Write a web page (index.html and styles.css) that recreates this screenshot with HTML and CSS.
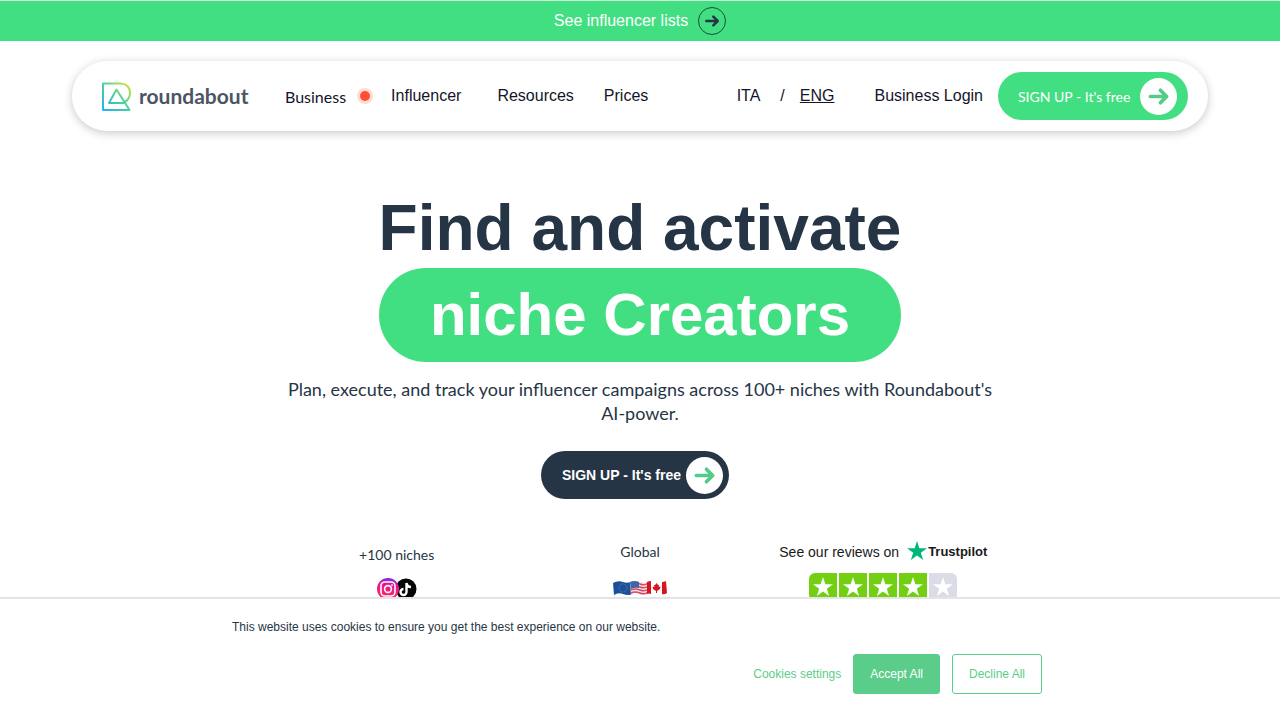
FILE: index.html
```html
<!DOCTYPE html>
<html lang="en">
<head>
    <meta charset="UTF-8">
    <meta name="viewport" content="width=device-width, initial-scale=1.0">
    <title>Roundabout</title>
    <link rel="stylesheet" href="styles.css">
</head>
<body>
    <!-- shared shapes -->
    <svg class="sprite" aria-hidden="true">
        <symbol id="arrow" viewBox="0 0 24 24">
            <path d="M3.500 12H20M14 5.500L20.500 12L14 18.500" fill="none" stroke="currentColor" stroke-width="3.800" stroke-linecap="round" stroke-linejoin="round"/>
        </symbol>
        <symbol id="star" viewBox="0 0 20 20">
            <path d="M10 0L12.360 7.250H20L13.820 11.740L16.180 19L10 14.500L3.820 19L6.180 11.740L0 7.250H7.640Z" fill="currentColor"/>
        </symbol>
    </svg>

    <a class="top-bar" href="#">
        <span>See influencer lists</span>
        <span class="ring"><svg width="16" height="16"><use href="#arrow"/></svg></span>
    </a>

    <header class="navbar">
        <a class="logo" href="#">
            <svg width="29" height="30" viewBox="0 0 29 30" fill="none" aria-hidden="true">
                <defs>
                    <linearGradient id="logo-fill" x1="28" y1="1" x2="3" y2="29" gradientUnits="userSpaceOnUse">
                        <stop offset="0" stop-color="#e3e62c"/>
                        <stop offset="0.500" stop-color="#4fd29a"/>
                        <stop offset="1" stop-color="#23b6e6"/>
                    </linearGradient>
                </defs>
                <path d="M14.500 8.500L7 22H21.500C25.500 20 28 16 28 11.500C28 6 24 2.500 18.500 2.500H1V29H27.500L14.500 8.500Z" stroke="url(#logo-fill)" stroke-width="2" stroke-linejoin="round"/>
            </svg>
            <span class="logo-name">roundabout</span>
        </a>
        <nav class="menu">
            <a class="business" href="#">Business</a>
            <span class="dot"></span>
            <a class="influencer" href="#">Influencer</a>
            <a class="resources" href="#">Resources</a>
            <a href="#">Prices</a>
        </nav>
        <div class="lang">
            <a href="#">ITA</a>
            <span>/</span>
            <a class="active" href="#">ENG</a>
        </div>
        <a class="login" href="#">Business Login</a>
        <button class="signup signup-green" type="button">
            <span>SIGN UP - It's free</span>
            <span class="circle"><svg width="23" height="23"><use href="#arrow"/></svg></span>
        </button>
    </header>

    <main class="hero">
        <h1>Find and activate <span class="pill">niche Creators</span></h1>
        <p class="intro">Plan, execute, and track your influencer campaigns across 100+ niches with Roundabout's AI-power.</p>
        <button class="signup signup-dark" type="button">
            <span>SIGN UP - It's free</span>
            <span class="circle"><svg width="23" height="23"><use href="#arrow"/></svg></span>
        </button>

        <section class="facts">
            <div class="fact niches">
                <p>+100 niches</p>
                <svg width="40" height="22" viewBox="0 0 40 22" aria-hidden="true">
                    <defs>
                        <linearGradient id="insta" x1="12" y1="0" x2="9" y2="22" gradientUnits="userSpaceOnUse">
                            <stop offset="0" stop-color="#7a2be0"/>
                            <stop offset="0.350" stop-color="#f0128a"/>
                            <stop offset="1" stop-color="#ff2f5c"/>
                        </linearGradient>
                    </defs>
                    <circle cx="29" cy="11" r="10.500" fill="#050505"/>
                    <circle cx="11" cy="11" r="11" fill="url(#insta)"/>
                    <rect x="4" y="4" width="14" height="14" rx="4" fill="none" stroke="#fff" stroke-width="1.600"/>
                    <circle cx="11" cy="11" r="3.400" fill="none" stroke="#fff" stroke-width="1.600"/>
                    <circle cx="15" cy="7.100" r="0.900" fill="#fff"/>
                    <path d="M29.500 5V14A3 3 0 1 1 26.500 11M29.500 5C29.800 7.500 31.500 8.900 34 9" fill="none" stroke="#fff" stroke-width="2.400"/>
                </svg>
            </div>
            <div class="fact">
                <p>Global</p>
                <svg width="54" height="16" viewBox="0 0 54 16" aria-hidden="true">
                    <path d="M0 3Q5 0 10 2T20 1V14Q15 16 10 14T1 15Z" fill="#1b4f9c"/>
                    <circle cx="10" cy="8" r="4" fill="none" stroke="#6f8f96" stroke-width="1" stroke-dasharray="1 1.100"/>
                    <path d="M17 2Q22 0 27 2T35 1V14Q30 16 26 14T18 15Z" fill="#f1e9ee"/>
                    <path d="M18 4Q22 2 27 4T35 3M18 7Q22 5 27 7T35 6M18 10Q22 8 27 10T35 9M18 13Q22 11 27 13T35 12" fill="none" stroke="#d94b5c" stroke-width="1.500"/>
                    <path d="M17 2Q22 0 26 2V8Q22 7 18 9Z" fill="#4564a8"/>
                    <path d="M34 2Q39 0 44 2T53 1L54 13Q49 16 44 14T34 14Z" fill="#fff"/>
                    <path d="M34 2Q36 1 38 1V14Q36 13 34 14ZM49 2Q51 2 53 1L54 13Q51 15 49 14Z" fill="#d9141e"/>
                    <path d="M43.500 3L45 5L46 4.700L45.700 7L47.500 6.500L47 9L44 11V13H43V11L40 9L39.700 6.500L41.500 7L41 4.700L42.200 5Z" fill="#d9141e"/>
                </svg>
            </div>
            <div class="fact reviews">
                <p>See our reviews on <svg class="tp-star" width="20" height="19" viewBox="0 0 20 19" aria-hidden="true"><use href="#star" width="20" height="20"/></svg><b>Trustpilot</b></p>
                <div class="rating">
                    <span><svg width="20" height="20"><use href="#star"/></svg></span>
                    <span><svg width="20" height="20"><use href="#star"/></svg></span>
                    <span><svg width="20" height="20"><use href="#star"/></svg></span>
                    <span><svg width="20" height="20"><use href="#star"/></svg></span>
                    <span class="empty"><svg width="20" height="20"><use href="#star"/></svg></span>
                </div>
            </div>
        </section>
    </main>

    <div class="cookies" role="dialog" aria-label="Cookies">
        <div class="cookies-inner">
            <p>This website uses cookies to ensure you get the best experience on our website.</p>
            <div class="cookies-actions">
                <button class="settings" type="button">Cookies settings</button>
                <button class="accept" type="button">Accept All</button>
                <button class="decline" type="button">Decline All</button>
            </div>
        </div>
    </div>
</body>
</html>
```
FILE: styles.css
```css
*{
    margin: 0;
    padding: 0;
    box-sizing: border-box;
}

body{
    font-family: "Liberation Sans", Arial, sans-serif;
    font-size: 16px;
    color: #263545;
    background-color: white;
}

a{
    color: inherit;
    text-decoration: none;
}

button{
    font-family: inherit;
    border: none;
    cursor: pointer;
}

svg{
    display: block;
}

.sprite{
    position: absolute;
    width: 0;
    height: 0;
}

/* top bar */
.top-bar{
    display: flex;
    justify-content: center;
    align-items: center;
    gap: 10px;
    height: 41px;
    border-top: 1px solid #c9f5da;
    background-color: #42df82;
    color: white;
}

.ring{
    display: flex;
    justify-content: center;
    align-items: center;
    width: 28px;
    height: 28px;
    border: 1px solid #1d4b43;
    border-radius: 50%;
    color: #263545;
}

/* navigation */
.navbar{
    display: flex;
    align-items: center;
    height: 70px;
    margin: 20px 72px 0;
    padding: 0 20px 0 30px;
    border-radius: 35px;
    background-color: white;
    box-shadow: 0 2px 10px rgba(0, 0, 0, 0.22);
    color: #14142b;
    white-space: nowrap;
}

.logo{
    display: flex;
    align-items: center;
    gap: 8px;
    width: 183px;
}

.logo-name{
    font-family: Lato, sans-serif;
    font-size: 21px;
    font-weight: bold;
    line-height: 26px;
    color: #4b5563;
}

.menu{
    display: flex;
    align-items: center;
}

.business{
    font-family: Lato, sans-serif;
    margin-right: 14px;
}

.dot{
    width: 10px;
    height: 10px;
    margin-right: 21px;
    border-radius: 50%;
    background-color: #ff4f35;
    box-shadow: 0 0 0 3px #ffdcd5;
}

.influencer{
    margin-right: 36px;
}

.resources{
    margin-right: 30px;
}

.lang{
    display: flex;
    margin-left: auto;
    margin-right: 40px;
}

.lang span{
    margin: 0 15px 0 20px;
}

.lang .active{
    text-decoration: underline;
}

.login{
    margin-right: 15px;
}

/* sign up buttons */
.signup{
    display: flex;
    justify-content: space-between;
    align-items: center;
    height: 48px;
    border-radius: 24px;
    font-size: 14px;
    color: white;
}

.signup-green{
    width: 190px;
    padding: 0 11px 0 20px;
    background-color: #42df82;
    font-family: Lato, sans-serif;
}

.signup-dark{
    width: 188px;
    margin: 26px 10px 0 0;
    padding: 0 6px 0 21px;
    background-color: #263545;
    font-weight: bold;
}

.circle{
    display: flex;
    justify-content: center;
    align-items: center;
    width: 37px;
    height: 37px;
    border-radius: 50%;
    background-color: white;
    color: #52cc88;
}

/* hero */
.hero{
    display: flex;
    flex-direction: column;
    align-items: center;
    padding: 60px 20px 0;
}

h1{
    display: flex;
    flex-direction: column;
    align-items: center;
    gap: 2px;
    font-size: 64px;
    line-height: 75px;
    text-align: center;
}

.pill{
    padding: 0 51px;
    border-radius: 47px;
    background-color: #42df82;
    font-size: 60px;
    line-height: 94px;
    color: white;
}

.intro{
    max-width: 730px;
    margin-top: 15px;
    font-family: Lato, sans-serif;
    font-size: 18px;
    line-height: 24px;
    text-align: center;
}

/* facts */
.facts{
    display: grid;
    grid-template-columns: repeat(3, 1fr);
    width: 100%;
    max-width: 730px;
    margin-top: 41px;
}

.fact{
    display: flex;
    flex-direction: column;
    align-items: center;
    gap: 16px;
    font-family: Lato, sans-serif;
    font-size: 14px;
    line-height: 24px;
}

.niches{
    gap: 11px;
    padding-top: 3px;
}

.reviews{
    gap: 9px;
    font-family: "Liberation Sans", Arial, sans-serif;
    color: #191919;
    white-space: nowrap;
}

.reviews p{
    display: flex;
    align-items: center;
}

.reviews b{
    font-size: 13px;
}

.tp-star{
    margin: 0 1px 4px 8px;
    color: #00b67a;
}

.rating{
    display: flex;
    gap: 2px;
    overflow: hidden;
    border-radius: 6px;
}

.rating span{
    display: flex;
    justify-content: center;
    align-items: center;
    width: 28px;
    height: 28px;
    background-color: #73cf11;
    color: white;
}

.rating .empty{
    background-color: #dcdce6;
}

/* cookie banner */
.cookies{
    position: fixed;
    left: 0;
    right: 0;
    bottom: 0;
    padding: 19px 20px 26px;
    border-top: 2px solid #e4e4e8;
    background-color: white;
    font-size: 12px;
    line-height: 18px;
}

.cookies-inner{
    max-width: 816px;
    margin: 0 auto;
}

.cookies-actions{
    display: flex;
    justify-content: flex-end;
    gap: 12px;
    margin-top: 18px;
    padding-right: 6px;
}

.cookies button{
    height: 40px;
    padding: 0 16px;
    border: 1px solid #5bcd8a;
    border-radius: 3px;
    background-color: white;
    font-size: 12px;
    color: #5bcd8a;
}

.cookies .settings{
    padding: 0;
    border: none;
}

.cookies .accept{
    background-color: #5bcd8a;
    color: white;
}
```
